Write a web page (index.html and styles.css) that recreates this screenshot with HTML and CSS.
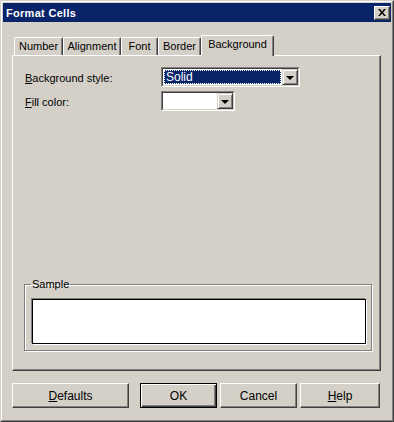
FILE: index.html
```html
<!DOCTYPE html>
<html lang="en">
<head>
  <meta charset="UTF-8" />
  <title>Format Cells</title>
  <link rel="stylesheet" href="styles.css">
</head>
<body>
  <div class="window">
    <div class="frame">
      <div class="titlebar">
        <span class="title">Format Cells</span>
        <button class="close" aria-label="Close">
          <svg width="8" height="7" viewBox="0 0 8 7">
            <path d="M0 0h2l2 2.5L6 0h2L5 3.5 8 7H6L4 4.5 2 7H0l3-3.5z" fill="#000"/>
          </svg>
        </button>
      </div>

      <div class="content">
        <div class="tabs">
          <div class="tab tab-number">Number</div>
          <div class="tab tab-alignment">Alignment</div>
          <div class="tab tab-font">Font</div>
          <div class="tab tab-border">Border</div>
          <div class="tab tab-background active">Background</div>
        </div>

        <div class="panel">
          <div class="row">
            <label class="label"><u>B</u>ackground style:</label>
            <div class="combo combo-style">
              <div class="combo-inner">
                <div class="combo-field"><span class="selected">Solid</span></div>
                <span class="combo-btn"><span class="arrow"></span></span>
              </div>
            </div>
          </div>
          <div class="row">
            <label class="label"><u>F</u>ill color:</label>
            <div class="combo combo-fill">
              <div class="combo-inner">
                <div class="combo-field"></div>
                <span class="combo-btn"><span class="arrow"></span></span>
              </div>
            </div>
          </div>

          <fieldset class="sample">
            <legend>Sample</legend>
            <div class="sample-box"></div>
          </fieldset>
        </div>

        <div class="buttons">
          <button class="btn btn-defaults"><u>D</u>efaults</button>
          <button class="btn btn-ok">OK</button>
          <button class="btn btn-cancel">Cancel</button>
          <button class="btn btn-help"><u>H</u>elp</button>
        </div>
      </div>
    </div>
  </div>
</body>
</html>
```

FILE: styles.css
```css
body {
  margin: 0;
  background: #ffffff;
  font-family: "Liberation Sans", Arial, sans-serif;
  font-size: 11px;
  color: #000;
  overflow: hidden;
}
.window {
  width: 394px;
  height: 422px;
  box-sizing: border-box;
  background: #d4d0c8;
  border: 1px solid;
  border-color: #d4d0c8 #404040 #404040 #d4d0c8;
}
.frame {
  height: 100%;
  box-sizing: border-box;
  border: 1px solid;
  border-color: #ffffff #808080 #808080 #ffffff;
  padding: 1px;
}
.titlebar {
  height: 19px;
  background: #0a246a;
  display: flex;
  align-items: center;
  justify-content: space-between;
  padding: 0 1px 0 3px;
}
.title {
  color: #fff;
  font-weight: bold;
  font-size: 11px;
  letter-spacing: 0.3px;
}
.close {
  width: 16px;
  height: 14px;
  padding: 0;
  margin: 0;
  background: #d4d0c8;
  border: 1px solid;
  border-color: #ffffff #404040 #404040 #ffffff;
  box-shadow: inset -1px -1px 0 #808080;
  display: flex;
  align-items: center;
  justify-content: center;
}
.close svg {
  display: block;
  margin-left: -1px;
}
.content {
  padding: 13px 0 0 9px;
}

/* tabs */
.tabs {
  display: flex;
  align-items: flex-end;
  height: 20px;
  padding-left: 2px;
}
.tab {
  box-sizing: border-box;
  height: 18px;
  border-top: 1px solid #fff;
  border-left: 1px solid #fff;
  border-right: 1px solid #404040;
  box-shadow: inset -1px 0 0 #808080;
  border-radius: 2px 2px 0 0;
  text-align: center;
  line-height: 16px;
}
.tab-number { width: 49px; }
.tab-alignment { width: 58px; }
.tab-font { width: 37px; }
.tab-border { width: 43px; }
.tab-background { width: 73px; }
.tab.active {
  height: 21px;
  margin-bottom: -1px;
  background: #d4d0c8;
  position: relative;
  z-index: 1;
  line-height: 17px;
}

/* panel */
.panel {
  width: 369px;
  height: 316px;
  box-sizing: border-box;
  border-top: 1px solid #fff;
  border-left: 1px solid #fff;
  border-right: 1px solid #404040;
  border-bottom: 1px solid #404040;
  box-shadow: inset -1px -1px 0 #808080;
  padding: 11px 0 19px 12px;
  display: flex;
  flex-direction: column;
  gap: 4px;
}
.row {
  display: flex;
  align-items: center;
  height: 20px;
}
.label {
  width: 136px;
  padding-top: 1px;
}
.combo {
  box-sizing: border-box;
  height: 20px;
  border: 1px solid;
  border-color: #808080 #ffffff #ffffff #808080;
}
.combo-style { width: 139px; }
.combo-fill { width: 74px; }
.combo-inner {
  height: 100%;
  box-sizing: border-box;
  border: 1px solid;
  border-color: #404040 #d4d0c8 #d4d0c8 #404040;
  background: #fff;
  display: flex;
}
.combo-field {
  flex: 1;
  padding: 1px;
  display: flex;
}
.selected {
  flex: 1;
  background: #0a246a;
  color: #fff;
  outline: 1px dotted #fff;
  outline-offset: -1px;
  padding-left: 2px;
  line-height: 14px;
  font-size: 12px;
}
.combo-btn {
  width: 16px;
  box-sizing: border-box;
  background: #d4d0c8;
  border: 1px solid;
  border-color: #d4d0c8 #404040 #404040 #d4d0c8;
  box-shadow: inset 1px 1px 0 #fff, inset -1px -1px 0 #808080;
  display: flex;
  align-items: center;
  justify-content: center;
}
.arrow {
  width: 0;
  height: 0;
  border-left: 4px solid transparent;
  border-right: 4px solid transparent;
  border-top: 4px solid #000;
  margin-top: 1px;
}

/* sample group */
.sample {
  margin: auto 0 0 -1px;
  width: 348px;
  min-width: 0;
  box-sizing: border-box;
  border: 1px solid #808080;
  box-shadow: 1px 1px 0 #fff, inset 1px 1px 0 #fff;
  padding: 8px 5px 6px 7px;
}
.sample legend {
  padding: 0 1px;
  margin-left: -1px;
  line-height: 13px;
}
.sample-box {
  height: 45px;
  box-sizing: border-box;
  background: #fff;
  border: 1px solid #000;
  box-shadow: -1px -1px 0 #808080, 1px 1px 0 #fff;
}

/* buttons */
.buttons {
  display: flex;
  gap: 3px;
  margin-top: 12px;
}
.btn {
  height: 25px;
  box-sizing: border-box;
  font-family: "Liberation Sans", Arial, sans-serif;
  font-size: 12px;
  color: #000;
  background: #d4d0c8;
  border: 1px solid;
  border-color: #ffffff #404040 #404040 #ffffff;
  box-shadow: inset -1px -1px 0 #808080;
  padding: 0;
}
.btn-defaults { width: 117px; margin-right: 8px; }
.btn-ok {
  width: 77px;
  border: 1px solid #000;
  box-shadow: inset 1px 1px 0 #fff, inset -1px -1px 0 #404040, inset -2px -2px 0 #808080;
}
.btn-cancel { width: 77px; }
.btn-help { width: 80px; }
```
